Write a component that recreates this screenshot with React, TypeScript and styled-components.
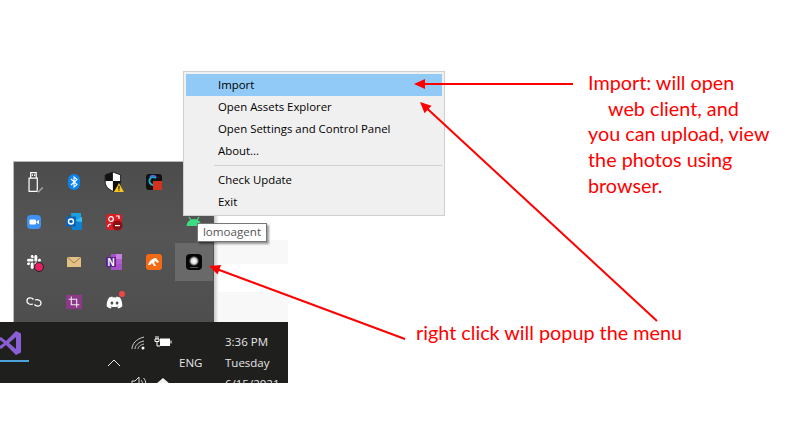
import React from "react";
import styled, { createGlobalStyle } from "styled-components";
import { FaDiscord, FaSlack } from "react-icons/fa";

const Global = createGlobalStyle`
  html, body { margin: 0; padding: 0; background: #fff; }
  body { width: 792px; height: 424px; overflow: hidden; font-family: "Open Sans", "Noto Sans", sans-serif; }
`;

const Canvas = styled.div`
  position: relative;
  width: 792px;
  height: 424px;
  padding-top: 161px;
  box-sizing: border-box;
  background: #fff;
  overflow: hidden;
`;

const Capture = styled.div`
  width: 288px;
  display: flex;
  flex-direction: column;
`;

const UpperCapture = styled.div`
  height: 161px;
  display: flex;
  padding-left: 13px;
`;

const Flyout = styled.div`
  width: 201px;
  height: 161px;
  box-sizing: border-box;
  display: grid;
  grid-template-columns: repeat(5, 40px);
  grid-auto-rows: 40px;
  background: linear-gradient(180deg, #4c4c4c 0%, #555 45%, #4e4e4e 100%);
  border-top: 1px solid #b9b9b9;
  border-left: 1px solid #b9b9b9;
`;

const TrayCell = styled.div<{ $active?: boolean }>`
  display: flex;
  align-items: center;
  justify-content: center;
  margin: ${(p) => (p.$active ? "1px" : "0")};
  background: ${(p) => (p.$active ? "#696969" : "transparent")};
  svg { display: block; }
`;

const SideBands = styled.div`
  flex: 1;
  display: flex;
  flex-direction: column;
  padding-top: 79px;
  background: linear-gradient(90deg, #c8c8c8 0, #fff 5px);
`;

const Band = styled.div<{ $tone: string; $h: number }>`
  height: ${(p) => p.$h}px;
  margin-left: 5px;
  background: ${(p) => p.$tone};
`;

const Taskbar = styled.div`
  height: 61px;
  box-sizing: border-box;
  padding-top: 9px;
  background: #1f1f1d;
  overflow: hidden;
  display: grid;
  grid-template-columns: 104px 20px 3px 24px 24px 4px 30px 16px 1fr;
  grid-template-rows: repeat(3, 21px);
  color: #e6e6e6;
`;

const VsCell = styled.div`
  grid-column: 1;
  grid-row: 1 / span 2;
  align-self: start;
  width: 29px;
  height: 30px;
  margin-top: -1px;
  border-bottom: 2px solid #4fa3dc;
  display: flex;
  align-items: flex-start;
`;

const GlyphCell = styled.div<{ $col: number; $row: number }>`
  grid-column: ${(p) => p.$col};
  grid-row: ${(p) => p.$row};
  display: flex;
  align-items: center;
  justify-content: center;
`;

const TaskText = styled.div<{ $col: number; $row: number }>`
  grid-column: ${(p) => p.$col};
  grid-row: ${(p) => p.$row};
  font: 11.5px/21px "Open Sans", sans-serif;
  white-space: nowrap;
`;

const Menu = styled.div`
  position: absolute;
  left: 183px;
  top: 71px;
  width: 262px;
  height: 145px;
  box-sizing: border-box;
  padding: 2px;
  border: 1px solid #cfcfcf;
  background: #f0f0f0;
  display: flex;
  flex-direction: column;
`;

const MenuItem = styled.div<{ $selected?: boolean }>`
  flex: none;
  height: 22px;
  padding-left: 32px;
  font: 11.4px/22px "Open Sans", sans-serif;
  color: #000;
  white-space: nowrap;
  background: ${(p) => (p.$selected ? "#91c9f7" : "transparent")};
`;

const MenuRule = styled.div`
  flex: none;
  height: 1px;
  margin: 3px 0 3px 28px;
  background: #d0d0d0;
`;

const Tip = styled.div`
  position: absolute;
  left: 197px;
  top: 223px;
  width: 70px;
  height: 19px;
  box-sizing: border-box;
  border: 1px solid #777;
  background: #fff;
  box-shadow: 2px 2px 2px rgba(0, 0, 0, 0.4);
  font: 11.6px/16px "Open Sans", sans-serif;
  color: #555;
  text-align: center;
`;

const Arrows = styled.svg`
  position: absolute;
  left: 0;
  top: 0;
  pointer-events: none;
`;

const Note = styled.div`
  position: absolute;
  left: 588px;
  top: 70px;
  width: 200px;
  font: 19.8px/25.7px Lato, "Open Sans", sans-serif;
  color: #f00;
  white-space: nowrap;
`;

const NoteLine = styled.div<{ $indent?: number }>`
  padding-left: ${(p) => p.$indent ?? 0}px;
`;

const Caption = styled.div`
  position: absolute;
  left: 416px;
  top: 319px;
  font: 19.8px/26px Lato, "Open Sans", sans-serif;
  color: #f00;
  white-space: nowrap;
`;

const Svg = ({ children, size = 20 }: { children: React.ReactNode; size?: number }) => (
  <svg width={size} height={size} viewBox="0 0 20 20">{children}</svg>
);

const Usb = () => (
  <Svg size={22}>
    <path d="M7 1.500h5v5H7zM5.500 6.500H13v12H5.500z" fill="none" stroke="#fff" strokeWidth="1.100" />
    <path d="M8 3h1v1.500H8zM10 3h1v1.500h-1z" fill="#fff" />
    <path d="M12 17l2 2 4-4" fill="none" stroke="#aaa" strokeWidth="1.200" />
  </Svg>
);
const Bluetooth = () => (
  <Svg>
    <rect x="4" y="2" width="12" height="16" rx="6" fill="#0a84f0" />
    <path d="M7 7l6 5.500-3 2.500V5l3 2.500L7 13" fill="none" stroke="#fff" strokeWidth="1.100" />
  </Svg>
);
const Shield = () => (
  <Svg size={22}>
    <path d="M9 1l7 2.500V10c0 4-3 6.500-7 8.500C5 16.500 2 14 2 10V3.500z" fill="#fff" stroke="#111" strokeWidth=".8" />
    <path d="M9 1v8H2V3.500zM9 9h7c0 4-3 7.500-7 9.500z" fill="#111" />
    <path d="M14.500 11l4.500 8h-9z" fill="#f7c51e" />
    <path d="M14 13.500h1v3h-1zM14 17h1v1h-1z" fill="#111" />
  </Svg>
);
const Webex = () => (
  <Svg>
    <rect x="2" y="2" width="16" height="16" rx="3" fill="#111" />
    <path d="M12 6a4 4 0 1 0-3 7" fill="none" stroke="#19b5d0" strokeWidth="2" />
    <path d="M6 5a4 4 0 0 1 6 0" fill="none" stroke="#4b6bd8" strokeWidth="2" />
    <rect x="9" y="9" width="9" height="9" fill="#d2331e" />
  </Svg>
);
const Zoom = () => (
  <Svg>
    <rect x="3" y="3" width="14" height="14" rx="4" fill="#3f92f2" />
    <rect x="5.500" y="7.500" width="6.500" height="5" rx="1" fill="#fff" />
    <path d="M12.500 9.500l2.500-1.800v4.600l-2.500-1.800z" fill="#fff" />
  </Svg>
);
const Outlook = () => (
  <Svg>
    <path d="M7 1h10v14H8z" fill="#1da0e2" />
    <path d="M7 8h11v10H8z" fill="#0f7fd0" />
    <path d="M11 9l7-4v5z" fill="#3ac0f0" />
    <rect x="2" y="4.500" width="10" height="10" fill="#0d62b5" />
    <circle cx="7" cy="9.500" r="2.500" fill="none" stroke="#fff" strokeWidth="1.400" />
  </Svg>
);
const Remote = () => (
  <Svg>
    <rect x="2" y="2" width="16" height="16" rx="3" fill="#d81d24" />
    <circle cx="7" cy="7" r="2.300" fill="none" stroke="#fff" strokeWidth="1.200" />
    <path d="M4 15c0-2 1.500-3 3-3M12 4h3v3" fill="none" stroke="#fff" strokeWidth="1.200" />
    <circle cx="13.500" cy="13.500" r="5" fill="#8a0f14" />
    <rect x="11" y="13" width="5" height="1.200" fill="#fff" />
  </Svg>
);
const Android = () => (
  <Svg>
    <path d="M2.500 14a7.500 7 0 0 1 15 0z" fill="#3ddc84" />
    <path d="M5 5l2 3M15 5l-2 3" stroke="#3ddc84" strokeWidth="1.300" />
  </Svg>
);
const IconStack = styled.span`
  position: relative;
  display: block;
  width: 17px;
  height: 17px;
`;
const SlackDot = styled.i`
  position: absolute;
  left: 8px;
  top: 8px;
  width: 8px;
  height: 8px;
  border-radius: 50%;
  background: #e61e63;
  border: 1px solid #222;
`;
const Slack = () => (
  <IconStack>
    <FaSlack size={16} color="#fff" />
    <SlackDot />
  </IconStack>
);
const Envelope = () => (
  <Svg>
    <rect x="3" y="5" width="14" height="10" fill="#e3c083" />
    <path d="M3 5l7 6 7-6" fill="none" stroke="#8d7650" strokeWidth=".9" />
  </Svg>
);
const OneNote = () => (
  <Svg>
    <rect x="7" y="2" width="11" height="16" fill="#a552c8" />
    <rect x="12" y="2" width="6" height="5" fill="#c77fe0" />
    <rect x="12" y="7" width="6" height="5" fill="#ae5fce" />
    <rect x="2" y="5" width="10" height="10" fill="#5c1f8f" />
    <text x="7" y="13.500" textAnchor="middle" fontFamily="Liberation Sans" fontSize="10" fontWeight="700" fill="#fff">N</text>
  </Svg>
);
const Relay = () => (
  <Svg>
    <rect x="2" y="2" width="16" height="16" rx="3" fill="#f26a13" />
    <path d="M4 13c2-5 5-7 8-7l3 4-2 1-1-2-2 1 2 4-2 0-2-3-2 2z" fill="#fff" />
  </Svg>
);
const Lomo = () => (
  <Svg>
    <defs>
      <radialGradient id="lomoGlow">
        <stop offset="0" stopColor="#fff" />
        <stop offset=".55" stopColor="#ddd" />
        <stop offset="1" stopColor="#111" />
      </radialGradient>
    </defs>
    <rect x="2" y="2" width="16" height="16" rx="4" fill="#050505" />
    <circle cx="10" cy="9" r="5" fill="url(#lomoGlow)" />
    <rect x="6" y="15" width="8" height=".8" fill="#666" />
  </Svg>
);
const Creative = () => (
  <Svg>
    <path d="M9.500 7.500c-1.500-2-6-2.500-6.500 1-.4 3 3 4.500 6 3.500" fill="none" stroke="#fff" strokeWidth="1.300" />
    <path d="M10.500 12.500c1.500 2 6 2.500 6.500-1 .4-3-3-4.500-6-3.500" fill="none" stroke="#fff" strokeWidth="1.300" />
  </Svg>
);
const Crop = () => (
  <Svg size={18}>
    <rect x="1" y="2" width="18" height="16" fill="#8a3a86" />
    <path d="M7 4v9h9M4 7h9v9" fill="none" stroke="#f2e4f0" strokeWidth="1.200" />
  </Svg>
);
const DiscordDot = styled.i`
  position: absolute;
  right: -2px;
  top: -3px;
  width: 6px;
  height: 6px;
  border-radius: 50%;
  background: #f04848;
`;
const Discord = () => (
  <IconStack>
    <FaDiscord size={17} color="#fff" />
    <DiscordDot />
  </IconStack>
);

const tray: Array<React.ComponentType | null> = [
  Usb, Bluetooth, Shield, Webex, null,
  Zoom, Outlook, Remote, null, Android,
  Slack, Envelope, OneNote, Relay, Lomo,
  Creative, Crop, Discord, null, null,
];

export default function App() {
  return (
    <Canvas>
      <Global />
      <Capture>
        <UpperCapture>
          <Flyout>
            {tray.map((Icon, i) => (
              <TrayCell key={i} $active={i === 14}>
                {Icon ? <Icon /> : null}
              </TrayCell>
            ))}
          </Flyout>
          <SideBands>
            <Band $tone="#f8f8f8" $h={24} />
            <Band $tone="#fff" $h={28} />
            <Band $tone="#f8f8f8" $h={30} />
          </SideBands>
        </UpperCapture>
        <Taskbar>
          <VsCell>
            <svg width="22" height="26" viewBox="0 0 22 26">
              <path d="M16 1l5 2.500v19L16 25 6 15l-5 4-3-2 6-4-6-4 3-2 5 4z" fill="#8a5fd6" />
              <path d="M16 7v12l-7-6z" fill="#1f1f1d" />
            </svg>
          </VsCell>
          <GlyphCell $col={2} $row={2}>
            <svg width="14" height="8" viewBox="0 0 14 8"><path d="M1 7l6-6 6 6" fill="none" stroke="#f0f0f0" /></svg>
          </GlyphCell>
          <GlyphCell $col={4} $row={1}>
            <svg width="16" height="16" viewBox="0 0 16 16">
              <path d="M1 15C1 10 5 5 13 3M4 15c0-3 3-7 9-8M7 15c0-2 2-4 6-5" fill="none" stroke="#ccc" />
              <circle cx="12" cy="14" r="1.500" fill="#fff" />
            </svg>
          </GlyphCell>
          <GlyphCell $col={5} $row={1}>
            <svg width="18" height="12" viewBox="0 0 18 12">
              <rect x="6" y="2.500" width="10" height="7.500" fill="#fff" />
              <path d="M2 0v3M4 0v3M1 3h4v2.500H1zM3 5.500V10h3" fill="none" stroke="#fff" />
              <rect x="16.500" y="4.500" width="1" height="3" fill="#fff" />
            </svg>
          </GlyphCell>
          <GlyphCell $col={4} $row={3}>
            <svg width="16" height="16" viewBox="0 0 16 16">
              <path d="M1 5h3l4-4v13l-4-4H1zM10 4c2 2 2 5 0 7M12.500 2c3 3 3 8 0 11" fill="none" stroke="#ddd" />
            </svg>
          </GlyphCell>
          <GlyphCell $col={5} $row={3}>
            <svg width="16" height="16" viewBox="0 0 16 16">
              <path d="M8 2l7 6v7H1V8z" fill="#f4f4f4" />
            </svg>
          </GlyphCell>
          <TaskText $col={7} $row={2}>ENG</TaskText>
          <TaskText $col={9} $row={1}>3:36 PM</TaskText>
          <TaskText $col={9} $row={2}>Tuesday</TaskText>
          <TaskText $col={9} $row={3}>6/15/2021</TaskText>
        </Taskbar>
      </Capture>

      <Menu>
        <MenuItem $selected>Import</MenuItem>
        <MenuItem>Open Assets Explorer</MenuItem>
        <MenuItem>Open Settings and Control Panel</MenuItem>
        <MenuItem>About...</MenuItem>
        <MenuRule />
        <MenuItem>Check Update</MenuItem>
        <MenuItem>Exit</MenuItem>
      </Menu>
      <Tip>lomoagent</Tip>

      <Arrows width="792" height="424" viewBox="0 0 792 424">
        <g stroke="#f00" strokeWidth="2" fill="none">
          <path d="M573 84H424" />
          <path d="M657 321L426 107.500" />
          <path d="M405 339L218 269.500" />
        </g>
        <g fill="#f00">
          <path d="M414 84l11-5v10z" />
          <path d="M420 102l11.500 3.800-6.900 7.400z" />
          <path d="M209 266l12-.9-3.400 9.400z" />
        </g>
      </Arrows>

      <Note>
        <NoteLine>Import: will open</NoteLine>
        <NoteLine $indent={20}>web client, and</NoteLine>
        <NoteLine>you can upload, view</NoteLine>
        <NoteLine>the photos using</NoteLine>
        <NoteLine>browser.</NoteLine>
      </Note>
      <Caption>right click will popup the menu</Caption>
    </Canvas>
  );
}
